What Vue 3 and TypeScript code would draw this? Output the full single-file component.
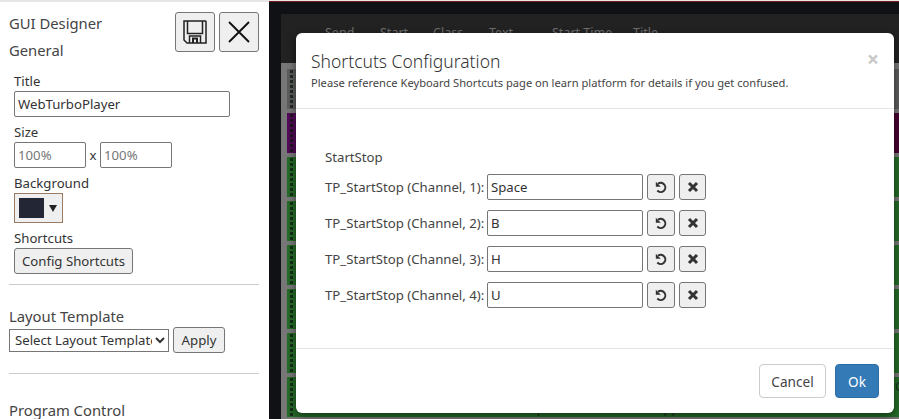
<script setup lang="ts">
const shortcuts = [
  { label: 'TP_StartStop (Channel, 1):', key: 'Space' },
  { label: 'TP_StartStop (Channel, 2):', key: 'B' },
  { label: 'TP_StartStop (Channel, 3):', key: 'H' },
  { label: 'TP_StartStop (Channel, 4):', key: 'U' },
]
const cols = [
  { t: 'Send', w: 55 },
  { t: 'Start', w: 53 },
  { t: 'Class', w: 56 },
  { t: 'Text', w: 63 },
  { t: 'Start Time', w: 81 },
  { t: 'Title', w: 60 },
]
const rows = ['gray', 'purple', 'green', 'green', 'green', 'green', 'green', 'green']
</script>

<template>
  <div class="page">
    <aside class="side">
      <div class="top">
        <div class="titles">
          <div class="h">GUI Designer</div>
          <div class="h general">General</div>
        </div>
        <div class="tools">
          <button class="tool">
            <svg width="24" height="24" viewBox="0 0 24 24" fill="none" stroke="#222" stroke-width="1.500">
              <path d="M1 1h21.500l.5.500V23H4l-3-3z" />
              <path d="M4.500 1v12.500h15V1" />
              <path d="M6.500 23v-7h11v7" />
              <path d="M10 23v-4.500h4V23" stroke-width="2" />
            </svg>
          </button>
          <button class="tool">
            <svg width="22" height="22" viewBox="0 0 22 22" fill="none" stroke="#111" stroke-width="1.900">
              <path d="M1 1l20 20M21 1L1 21" />
            </svg>
          </button>
        </div>
      </div>
      <div class="group">
        <label class="lab">Title</label>
        <input class="inp title" value="WebTurboPlayer" />
        <label class="lab">Size</label>
        <div class="sizes">
          <input class="inp small" placeholder="100%" />
          <span class="x">x</span>
          <input class="inp small" placeholder="100%" />
        </div>
        <label class="lab">Background</label>
        <button class="color"><span class="swatch"></span><span class="arrow"></span></button>
        <label class="lab">Shortcuts</label>
        <button class="btn config">Config Shortcuts</button>
      </div>
      <hr class="rule first" />
      <div class="h layout">Layout Template</div>
      <div class="tpl">
        <select class="sel"><option>Select Layout Template</option></select>
        <button class="btn apply">Apply</button>
      </div>
      <hr class="rule second" />
      <div class="h program">Program Control</div>
    </aside>

    <main class="stage">
      <div class="redline"></div>
      <div class="board">
        <div class="thead">
          <span v-for="c in cols" :key="c.t" class="th" :style="{ width: c.w + 'px' }">{{ c.t }}</span>
        </div>
        <div class="tbody">
          <div v-for="(r, i) in rows" :key="i" class="trow" :class="r">
            <span class="dots"></span>
            <template v-if="i === 7">
              <span class="cell-text">Stop the timer when it appears</span>
              <span class="cell-edge">C</span>
            </template>
          </div>
        </div>
      </div>

      <section class="modal">
        <header class="m-head">
          <span class="close">×</span>
          <h4>Shortcuts Configuration</h4>
          <p>Please reference Keyboard Shortcuts page on learn platform for details if you get confused.</p>
        </header>
        <div class="m-body">
          <div class="grp">StartStop</div>
          <div v-for="s in shortcuts" :key="s.label" class="sc-row">
            <span class="sc-label">{{ s.label }}</span>
            <input class="inp key" :value="s.key" />
            <button class="ico">
              <svg width="14" height="14" viewBox="0 0 14 14" fill="none" stroke="#333" stroke-width="2">
                <path d="M4 3.700A4.600 4.600 0 1 1 3.300 10.500" />
                <path d="M1.800 1.800v5h5z" stroke="none" fill="#333" />
              </svg>
            </button>
            <button class="ico narrow">
              <svg width="12" height="12" viewBox="0 0 12 12" fill="none" stroke="#333" stroke-width="3">
                <path d="M2 2l8 8M10 2l-8 8" />
              </svg>
            </button>
          </div>
        </div>
        <footer class="m-foot">
          <button class="b cancel">Cancel</button>
          <button class="b ok">Ok</button>
        </footer>
      </section>
    </main>
  </div>
</template>

<style>
html, body { margin: 0; overflow: hidden; background: #fff; }
</style>

<style scoped>
.page {
  display: flex;
  width: 899px;
  height: 419px;
  overflow: hidden;
  font-family: "Noto Sans", "Open Sans", sans-serif;
  color: #333;
}
.side {
  width: 269px;
  height: 419px;
  box-sizing: border-box;
  flex: none;
  border-top: 2px solid #e6e6e6;
  padding: 0 10px 0 9px;
  overflow: hidden;
}
.top { display: flex; justify-content: space-between; height: 71px; box-sizing: border-box; padding-top: 10px; }
.titles { padding-top: 1px; }
.h { font-size: 14.800px; line-height: 20px; color: #444; }
.general { margin-top: 7px; }
.tools { display: flex; gap: 4px; }
.tool {
  width: 40px;
  height: 40px;
  padding: 0;
  display: flex;
  align-items: center;
  justify-content: center;
  background: #efefef;
  border: 1px solid #767676;
  border-radius: 3px;
}
.group { padding-left: 5px; }
.lab { display: block; font-size: 13.200px; line-height: 17px; color: #333; margin: 7px 0 1px; }
.lab:first-child { margin-top: 0; }
.inp {
  box-sizing: border-box;
  font: inherit;
  font-size: 13.200px;
  color: #333;
  border: 1px solid #767676;
  border-radius: 2px;
  padding: 0 3px;
  background: #fff;
  outline: none;
}
.inp::placeholder { color: #777; opacity: 1; }
.title { display: block; width: 216px; height: 26px; }
.sizes { display: flex; align-items: center; height: 26px; }
.small { width: 72px; height: 26px; }
.x { width: 14px; text-align: center; font-size: 13.200px; }
.color {
  display: flex;
  align-items: center;
  width: 49px;
  height: 30px;
  box-sizing: border-box;
  padding: 0 4px;
  border: 1px solid #9a7b5f;
  background: #efefef;
  gap: 5px;
}
.swatch { width: 25px; height: 20px; background: #232735; }
.arrow {
  width: 0;
  height: 0;
  border-left: 4px solid transparent;
  border-right: 4px solid transparent;
  border-top: 7px solid #222;
}
.btn {
  font: inherit;
  font-size: 13.200px;
  color: #333;
  height: 26px;
  padding: 0;
  background: #efefef;
  border: 1px solid #767676;
  border-radius: 3px;
  display: block;
}
.config { width: 119px; }
.apply { width: 52px; }
.rule { border: 0; border-top: 1px solid #ccc; margin: 0; }
.first { margin-top: 10px; }
.layout { margin-top: 21px; }
.tpl { display: flex; align-items: center; gap: 4px; margin-top: 1px; }
.sel {
  width: 160px;
  height: 23px;
  font: inherit;
  font-size: 13.200px;
  color: #333;
  background: #fff;
  border: 1px solid #767676;
  border-radius: 0;
  padding: 0 0 0 1px;
}
.second { margin-top: 20px; }
.program { margin-top: 26px; }

.stage {
  position: relative;
  flex: 1;
  height: 419px;
  box-sizing: border-box;
  border-top: 1px solid #e6e6e6;
  background: #101114;
  overflow: hidden;
}
.redline { height: 1px; background: #7a1a1e; }
.board { margin: 12px 0 0 12px; }
.thead { height: 49px; background: #222; display: flex; padding-left: 44px; box-sizing: border-box; }
.th { font-size: 12.500px; line-height: 38px; color: #6f6f6f; }
.tbody { background: #777; padding: 6px 0 0 6px; height: 356px; box-sizing: border-box; }
.trow { position: relative; height: 40px; margin-bottom: 4px; }
.trow.gray { background: #5c5c5c; }
.trow.purple { background: linear-gradient(90deg, #520a58, #480530); }
.trow.green { background: #256b28; }
.dots {
  position: absolute;
  left: 3px;
  top: 1px;
  bottom: 1px;
  width: 3px;
  background: repeating-linear-gradient(to bottom, rgba(15, 25, 15, 0.75) 0 3px, transparent 3px 5px);
}
.cell-text {
  position: absolute;
  left: 230px;
  bottom: 1px;
  font-size: 13px;
  line-height: 16px;
  color: #15301a;
}
.cell-edge {
  position: absolute;
  left: 608px;
  top: 1px;
  font-size: 13px;
  line-height: 16px;
  color: #15301a;
}

.modal {
  position: absolute;
  left: 27px;
  top: 32px;
  width: 598px;
  height: 380px;
  background: #fff;
  border-radius: 6px;
  box-shadow: 0 3px 9px rgba(0, 0, 0, 0.5);
  display: flex;
  flex-direction: column;
}
.m-head {
  height: 76px;
  box-sizing: border-box;
  border-bottom: 1px solid #e5e5e5;
  padding: 16px 15px 0;
  position: relative;
}
.m-head h4 { margin: 0; font-size: 17.500px; font-weight: 300; line-height: 25px; color: #333; }
.m-head p { margin: 0; font-size: 11.150px; line-height: 18px; color: #444; }
.close { position: absolute; right: 15px; top: 14px; font-size: 21px; line-height: 24px; font-weight: 700; color: #c8c8c8; }
.m-body { flex: 1; padding: 40px 15px 0 29px; font-size: 13.200px; color: #444; }
.grp { line-height: 17px; margin-bottom: 8px; }
.sc-row { display: flex; align-items: center; height: 26px; margin-bottom: 10px; }
.sc-label { width: 162px; flex: none; white-space: nowrap; }
.key { width: 156px; height: 26px; }
.ico {
  width: 28px;
  height: 26px;
  padding: 0;
  margin-left: 4px;
  display: flex;
  align-items: center;
  justify-content: center;
  background: #efefef;
  border: 1px solid #767676;
  border-radius: 3px;
}
.narrow { width: 27px; }
.m-foot {
  height: 65px;
  box-sizing: border-box;
  border-top: 1px solid #e5e5e5;
  display: flex;
  justify-content: flex-end;
  align-items: flex-start;
  gap: 9px;
  padding: 15px 15px 0;
}
.b { font: inherit; font-size: 13.600px; height: 34px; border-radius: 4px; border: 1px solid #ccc; background: #fff; color: #444; padding: 0; }
.cancel { width: 67px; }
.ok { width: 44px; background: #337ab7; border-color: #2e6da4; color: #fff; }
</style>
